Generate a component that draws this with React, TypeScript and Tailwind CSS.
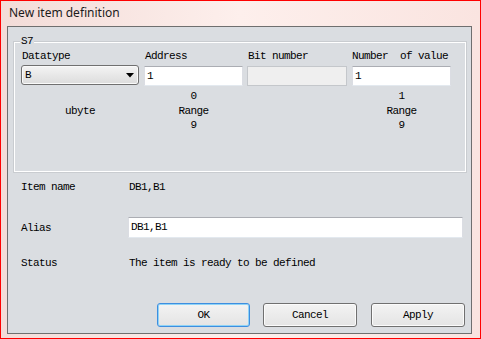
import React from 'react';

const mono = "font-['Liberation_Mono',monospace] text-[11px] tracking-[-0.6px] text-black";

const TextBox: React.FC<{ value?: string; disabled?: boolean; className?: string }> = ({ value, disabled, className }) => (
  <div
    className={`h-[20px] flex items-center pl-[2px] border ${
      disabled
        ? 'bg-[#efefef] border-[#c4c7cb]'
        : 'bg-white border-t-[#abadb3] border-l-[#dbdde3] border-r-[#dbdde3] border-b-[#e3e9ef]'
    } ${className ?? ''}`}
  >
    <span className={mono}>{value}</span>
  </div>
);

const Button: React.FC<{ label: string; focused?: boolean; className?: string }> = ({ label, focused, className }) => (
  <div
    className={`h-[24px] flex items-center justify-center rounded-[3px] border bg-gradient-to-b from-[#f3f3f3] to-[#e4e4e4] ${
      focused
        ? 'border-[#3d8ee0] shadow-[inset_0_0_0_1px_#8fd3f6]'
        : 'border-[#707070] shadow-[inset_0_0_0_1px_#fbfbfb]'
    } ${className ?? ''}`}
  >
    <span className={mono}>{label}</span>
  </div>
);

const RangeInfo: React.FC<{ from: string; to: string }> = ({ from, to }) => (
  <div className={`flex flex-col items-center leading-[14.5px] ${mono}`}>
    <span>{from}</span>
    <span>Range</span>
    <span>{to}</span>
  </div>
);

const App: React.FC = () => {
  return (
    <div className="w-[481px] h-[339px] border border-[#ff0000] bg-gradient-to-r from-[#f3dcd8] via-[#fdefec] to-[#fae4e0] flex flex-col overflow-hidden">
      {/* Title bar */}
      <div className="h-[25px] flex items-center pl-[8px]">
        <span className="font-['Noto_Sans',sans-serif] text-[12px] text-[#1b1b1b] -mt-[1px]">New item definition</span>
      </div>

      <div className="flex-1 flex pl-[6px] pr-[8px] pb-[4px]">
        <div className="flex-1 flex flex-col border border-[#6f6f6f] bg-[#dadde1] pl-[6px] pr-[5px]">
          {/* S7 group */}
          <div className="relative mt-[15px] h-[130px] border border-white shadow-[0_0_0_1px_#c9ccd0]">
            <span className={`absolute -top-[9px] left-[5px] px-[1px] bg-[#dadde1] leading-[14px] ${mono}`}>S7</span>

            <div className="flex pl-[6px] pt-[6px]">
              <div className="w-[118px]">
                <div className={`h-[14px] leading-[14px] pl-[1px] ${mono}`}>Datatype</div>
                <div className="mt-[2px] h-[20px] flex items-center justify-between px-[3px] rounded-[3px] border border-[#707070] bg-gradient-to-b from-[#f4f4f4] to-[#dcdcdc] shadow-[inset_0_0_0_1px_#fafafa]">
                  <span className={mono}>B</span>
                  <svg width="8" height="5" viewBox="0 0 8 5" className="mr-[1px]">
                    <polygon points="0,0 8,0 4,4.5" fill="#000" />
                  </svg>
                </div>
                <div className={`mt-[19px] text-center leading-[14px] ${mono}`}>ubyte</div>
              </div>

              <div className="w-[99px] ml-[5px]">
                <div className={`h-[14px] leading-[14px] pl-[1px] ${mono}`}>Address</div>
                <TextBox value="1" className="mt-[3px]" />
                <div className="mt-[3px]">
                  <RangeInfo from="0" to="9" />
                </div>
              </div>

              <div className="w-[100px] ml-[4px]">
                <div className={`h-[14px] leading-[14px] pl-[1px] ${mono}`}>Bit number</div>
                <TextBox disabled className="mt-[3px]" />
              </div>

              <div className="w-[99px] ml-[5px]">
                <div className={`h-[14px] leading-[14px] whitespace-pre ${mono}`}>Number  of value</div>
                <TextBox value="1" className="mt-[3px]" />
                <div className="mt-[3px]">
                  <RangeInfo from="1" to="9" />
                </div>
              </div>
            </div>
          </div>

          {/* Item details */}
          <div className="flex mt-[8px] h-[14px] leading-[14px] pl-[7px]">
            <span className={`w-[108px] ${mono}`}>Item name</span>
            <span className={mono}>DB1,B1</span>
          </div>

          <div className="flex items-center mt-[23px] pl-[7px]">
            <span className={`w-[107px] pt-[1px] ${mono}`}>Alias</span>
            <TextBox value="DB1,B1" className="flex-1 mr-[3px] h-[21px]" />
          </div>

          <div className="flex mt-[18px] h-[14px] leading-[14px] pl-[7px]">
            <span className={`w-[108px] ${mono}`}>Status</span>
            <span className={mono}>The item is ready to be defined</span>
          </div>

          {/* Buttons */}
          <div className="mt-auto mb-[6px] flex justify-end pr-[1px]">
            <Button label="OK" focused className="w-[93px]" />
            <Button label="Cancel" className="w-[94px] ml-[13px]" />
            <Button label="Apply" className="w-[94px] ml-[14px]" />
          </div>
        </div>
      </div>
    </div>
  );
};

export default App;
